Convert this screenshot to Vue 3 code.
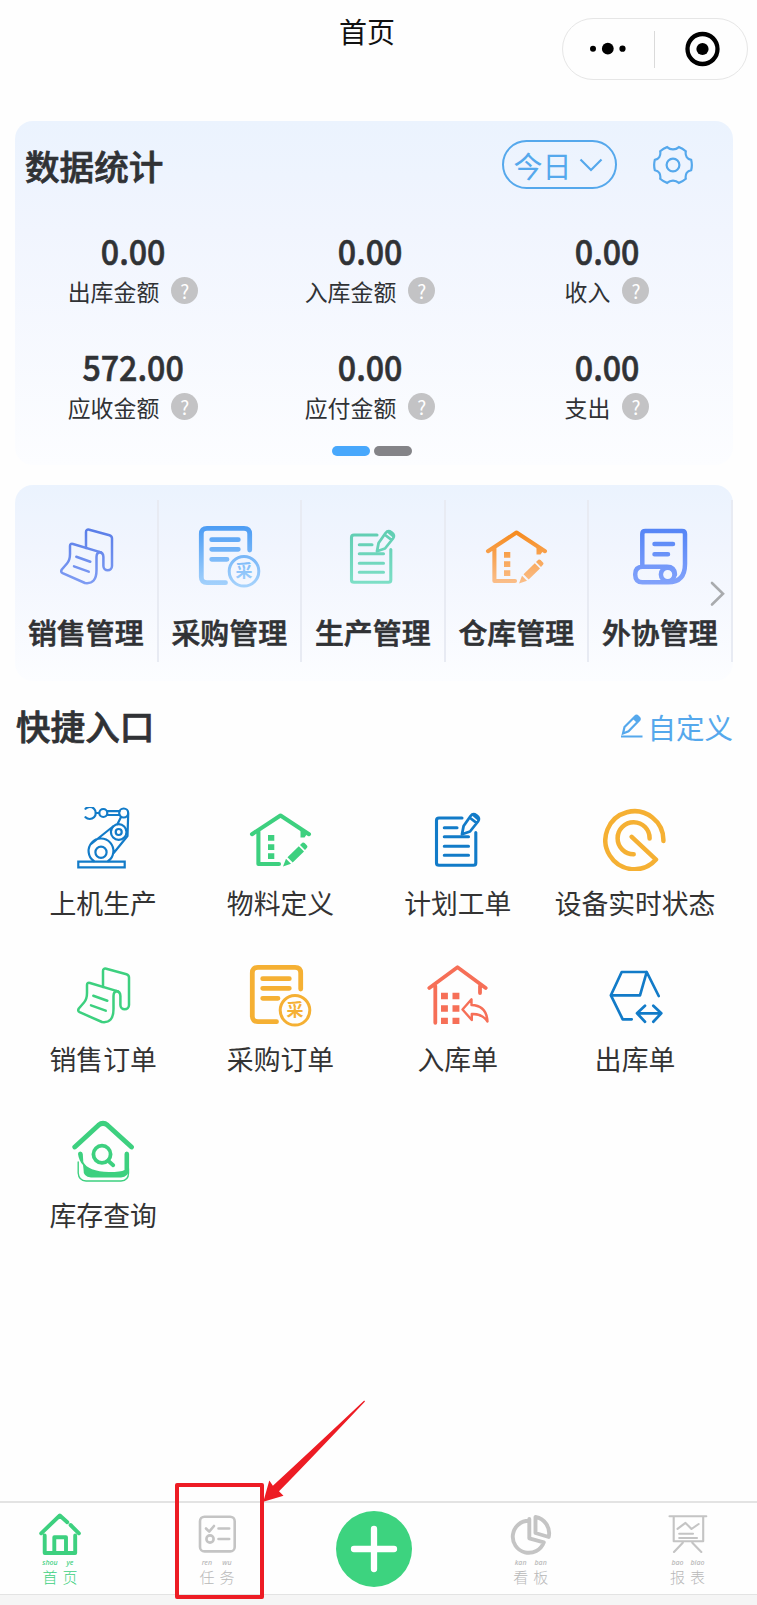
<script setup>
const stats = [
  { value: '0.00', label: '出库金额' },
  { value: '0.00', label: '入库金额' },
  { value: '0.00', label: '收入' },
  { value: '572.00', label: '应收金额' },
  { value: '0.00', label: '应付金额' },
  { value: '0.00', label: '支出' },
]

const modules = [
  { label: '销售管理', icon: 'sale', ink: 'ink-indigo' },
  { label: '采购管理', icon: 'purchase', ink: 'ink-sky', seal: '采' },
  { label: '生产管理', icon: 'plan', ink: 'ink-mint' },
  { label: '仓库管理', icon: 'material', ink: 'ink-orange' },
  { label: '外协管理', icon: 'scroll', ink: 'ink-royal' },
]

const shortcuts = [
  { label: '上机生产', icon: 'robot', ink: 'ink-blue' },
  { label: '物料定义', icon: 'material', ink: 'ink-green' },
  { label: '计划工单', icon: 'plan', ink: 'ink-blue' },
  { label: '设备实时状态', icon: 'device', ink: 'ink-amber' },
  { label: '销售订单', icon: 'sale', ink: 'ink-green' },
  { label: '采购订单', icon: 'purchase', ink: 'ink-amber', seal: '采' },
  { label: '入库单', icon: 'inbound', ink: 'ink-coral' },
  { label: '出库单', icon: 'outbound', ink: 'ink-blue' },
  { label: '库存查询', icon: 'stock', ink: 'ink-green' },
]

const tabs = [
  { icon: 'home', chars: [['shou', '首'], ['ye', '页']], active: true },
  { icon: 'task', chars: [['ren', '任'], ['wu', '务']] },
  { icon: 'add' },
  { icon: 'board', chars: [['kan', '看'], ['ban', '板']] },
  { icon: 'report', chars: [['bao', '报'], ['biao', '表']] },
]
</script>

<template>
  <div class="page">
    <svg class="defs" width="0" height="0" aria-hidden="true">
      <defs>
        <linearGradient id="g-indigo" gradientUnits="userSpaceOnUse" x1="0" y1="5" x2="0" y2="60"><stop offset="0" stop-color="#5a7ee8" /><stop offset="1" stop-color="#7f9cf3" /></linearGradient>
        <linearGradient id="g-sky" gradientUnits="userSpaceOnUse" x1="0" y1="3" x2="0" y2="62"><stop offset="0" stop-color="#4d9df4" /><stop offset="1" stop-color="#a5d2fc" /></linearGradient>
        <linearGradient id="g-mint" gradientUnits="userSpaceOnUse" x1="0" y1="6" x2="0" y2="60"><stop offset="0" stop-color="#60cdb2" /><stop offset="1" stop-color="#7ddfc6" /></linearGradient>
        <linearGradient id="g-orange" gradientUnits="userSpaceOnUse" x1="0" y1="8" x2="0" y2="60"><stop offset="0" stop-color="#f68b1f" /><stop offset="1" stop-color="#fabf8c" /></linearGradient>
        <linearGradient id="g-royal" gradientUnits="userSpaceOnUse" x1="0" y1="5" x2="0" y2="60"><stop offset="0" stop-color="#5585f6" /><stop offset="1" stop-color="#82a2fb" /></linearGradient>
      </defs>

      <symbol id="sale" viewBox="0 0 64 64">
        <g class="s" stroke-width="2.5">
          <path d="M32 24V8Q32 5 35.3 5.7L55.5 11.2Q58 12 58 14.5V42a4.3 4.3 0 0 1-8.6 0V33Q49.4 28.5 45 28" />
          <path d="M47 28.4L19 20Q16 19.3 16 22V30Q16 36 13 39.5L7.8 45.5Q6.3 48 8.6 49.2L31 59Q42.5 60.5 42.5 46V33Q42.5 28.2 46 28.2" />
          <path d="M22.3 32.7l14 5M20 42.3l14.7 5.4" />
        </g>
      </symbol>
      <symbol id="purchase" viewBox="0 0 64 64">
        <path class="s" stroke-width="4.8" d="M28.5 58.7H10Q4.300 58.7 4.3 53V10Q4.3 4.3 10 4.3H47Q52.7 4.3 52.7 10V26M14.7 15.7H41.3M14.7 25.3H41.3M14.7 35.3H30" />
        <circle class="s" stroke-width="3" cx="47" cy="47.3" r="14.8" />
      </symbol>
      <symbol id="plan" viewBox="0 0 64 64">
        <path class="s" stroke-width="3.1" d="M36 11H13Q10.5 11 10.5 13.5V56Q10.5 58.3 13 58.3H47.500Q49.8 58.3 49.8 56V25.5M18.3 20.7H31M18.3 29.8H42.5M18.3 39.3H42.5M18.3 48.3H42.5" />
        <path class="s" stroke-width="2.8" d="M36 27.3L37.6 19 44.600 9Q47 6 50.500 8.300 54.300 11 52 14.500L44 24.500ZM44.800 11.500l5.700 4.300M48 8.500l4 3.300" />
      </symbol>
      <symbol id="material" viewBox="0 0 64 64">
        <path class="s" stroke-width="4.100" stroke-linejoin="miter" stroke-linecap="butt" d="M4 27.200L32.500 8.500 61 27.200M10.400 24V57H31" />
        <path class="f" d="M52.500 23h4.500l2 4-2.500 3.500h-4z" />
        <path class="f" d="M20 28h6.300v5.800H20zM20 37.200h6.300V43H20zM20 46.200h6.300V52H20zM35 59.500L38 51.700 43 56.700zM39.500 50.300L50.800 39.300 56 44.500 44.700 55.500zM52 38L54.300 35.800Q55.500 35 56.600 36L59 38.400Q60 39.500 59 40.800L57 43z" />
      </symbol>
      <symbol id="scroll" viewBox="0 0 64 64">
        <g class="s" stroke-width="4.500">
          <path d="M14.300 42V10Q14.300 7 17.300 7H54Q57 7 57 10V40Q57 58.300 40 58.300H14.500Q7.200 58.300 7.200 50.500 7.200 42.700 14.500 42.700H39Q46.500 42.700 47 50.300" />
          <circle cx="39.700" cy="50.500" r="6.800" /><path d="M26.500 20H45M26.500 30.300H40" />
        </g>
      </symbol>
      <symbol id="robot" viewBox="0 0 64 64">
        <g class="s" stroke-width="2.200">
          <path d="M14.500 1.800A6 6 0 1 1 14.500 10.200M24.500 6H28M36.500 4.200H48.500M36.500 8H48.500" />
          <circle cx="32.300" cy="6" r="4" /><circle cx="52.700" cy="6" r="4.500" />
          <circle cx="47.700" cy="25" r="7.800" /><circle cx="47.700" cy="25" r="3" />
          <path d="M57.200 7L56.500 29 42.700 46M50 10L46.500 17M19.500 37.500L42 19.500M22.800 54A12.400 12.400 0 1 1 37.200 54" />
          <circle cx="30" cy="45.300" r="5.600" /><path d="M7.300 54.600H53.700V60.300H7.300z" stroke-linejoin="miter" />
        </g>
      </symbol>
      <symbol id="device" viewBox="0 0 64 64">
        <path class="s" stroke-width="4.500" d="M60.400 34A29 29 0 1 0 53 52.600L28.700 29.800M46.600 31.500A16 16 0 1 0 30.700 47.200" />
      </symbol>
      <symbol id="inbound" viewBox="0 0 64 64">
        <path class="s" stroke-width="3.800" d="M3.300 25L31.500 4.300 59.700 25M9.300 23V59.800M54 23V30" />
        <path class="f" d="M15 29.800h6.900v6.500h-6.900zM26.500 29.800h6.900v6.500h-6.900zM15 42.200h6.900v6.500h-6.900zM26.500 42.200h6.900v6.500h-6.900zM15 54.700h6.900V61h-6.900zM26.500 54.700h6.900V61h-6.900z" />
        <path class="s" stroke-width="2.400" d="M36.500 46.500L45.500 36.300V42Q60.500 42.500 61.500 58.500 56 50.500 45.800 51V57z" />
      </symbol>
      <symbol id="outbound" viewBox="0 0 64 64">
        <path class="s" stroke-width="2.700" stroke-linejoin="miter" d="M55.700 33L43.700 9H18.700L7.900 32.300H37L43.700 9M7.900 32.300L19.700 56.300H28.700M34 50.300H58.300M42 42.700L34 50.300 42 58.700M50.300 42.700L58.300 50.300 50.300 58.700" />
      </symbol>
      <symbol id="stock" viewBox="0 0 64 64">
        <path class="s" stroke-width="4.900" d="M3.800 28L27.500 6.200Q32 2.500 36.500 6.200L60.500 28" />
        <circle class="s" cx="31" cy="35.300" r="8.600" stroke-width="3.800" />
        <path class="s" stroke-width="3.900" d="M38 42.500L42.200 46.200" />
        <path class="f" d="M7 35Q7 32.500 9.200 32.500 11.600 32.500 11.800 35L12.300 43Q17 52.500 38 53 50 53 53.500 51V35Q53.500 32.500 55.800 32.500 58.100 32.500 58.100 35V50Q57.500 58 50 58.500H20Q12 58 12.500 50L12 46Q8 42 7 35z" />
        <path class="s" stroke-width="1.400" d="M7.200 43V54Q7.800 61.800 15 62H50Q57.500 61.500 57.500 54V50" />
      </symbol>

      <symbol id="home" viewBox="0 0 44 44">
        <path class="s" stroke-width="3.900" d="M3.200 22.300L21.800 4.500 29.300 11.300M32.600 14L40.900 22.300M6.700 24.500V42H37.200V24.500" />
        <path class="s" stroke-width="3.900" d="M16.300 41V26.300H28V41" />
      </symbol>
      <symbol id="task" viewBox="0 0 44 44">
        <g class="s" stroke-width="2.600">
          <rect x="5" y="5.700" width="34.700" height="34.700" rx="4.500" />
          <path d="M11 17.500L14.200 20.700 19 15M23.500 17.500H34.200M23.500 28H34.200" /><circle cx="15" cy="28" r="3.600" />
        </g>
      </symbol>
      <symbol id="board" viewBox="0 0 44 44">
        <path class="s" stroke-width="3.900" stroke-linejoin="miter" stroke-linecap="butt" d="M20.300 9.800A16 16 0 1 0 34.800 31.300L20.300 27.300V7.900M26.500 6V22L39.700 26A16.500 16.500 0 0 0 26.500 6z" />
      </symbol>
      <symbol id="report" viewBox="0 0 44 44">
        <path class="s" stroke-width="2.100" d="M3.500 5.300H40.300M7.700 5.500V30.300H37.200V5.500M11.500 17.800L19.500 11.900 25.500 18 32.700 13M13.200 22.700H27M13.200 27H31M16.800 31.700L8 41M26.300 31.700L35.300 41" />
      </symbol>
    </svg>

    <header class="nav">
      <h1 class="nav-title">首页</h1>
      <div class="capsule">
        <svg class="capsule-half" viewBox="0 0 92 60"><circle cx="30" cy="29.700" r="3" /><circle cx="44.800" cy="29.700" r="5.900" /><circle cx="59.500" cy="29.700" r="3.100" /></svg>
        <span class="capsule-line"></span>
        <svg class="capsule-half" viewBox="0 0 92 60"><circle class="ring" cx="47.500" cy="30" r="15" /><circle cx="47.500" cy="30" r="6.100" /></svg>
      </div>
    </header>

    <section class="card stat-card">
      <div class="stat-head">
        <h2 class="heading">数据统计</h2>
        <button class="period">
          <span>今日</span>
          <svg width="24" height="14" viewBox="0 0 24 14"><path d="M1.500 1.500L12 12 22.500 1.500" /></svg>
        </button>
        <svg class="gear" width="40" height="40" viewBox="0 0 40 40">
          <path d="M14.100 2.100C17.500 5.200 22.500 5.200 25.900 2.100Q29.500 3.200 32.800 6.200C32 11 34.300 14.200 38.200 14.900Q39.500 20 38.200 25.100C34.300 25.800 32 29 32.800 33.800Q29.500 36.800 25.900 37.900C22.500 34.800 17.500 34.800 14.100 37.900Q10.500 36.800 7.200 33.800C8 29 5.700 25.800 1.800 25.100Q.5 20 1.800 14.900C5.700 14.200 8 11 7.200 6.200Q10.500 3.200 14.100 2.100z" /><circle cx="20" cy="20" r="6.400" />
        </svg>
      </div>
      <div class="stat-grid">
        <div v-for="item in stats" :key="item.label" class="stat">
          <strong class="stat-value">{{ item.value }}</strong>
          <span class="stat-label">{{ item.label }}<i class="help">?</i></span>
        </div>
      </div>
      <div class="dots"><span class="dot on"></span><span class="dot"></span></div>
    </section>

    <section class="card modules">
      <div v-for="item in modules" :key="item.label" class="module">
        <svg class="icon" :class="item.ink">
          <use :href="'#' + item.icon" />
          <text v-if="item.seal" class="f seal" x="47" y="53.400" text-anchor="middle">{{ item.seal }}</text>
        </svg>
        <span class="module-label">{{ item.label }}</span>
      </div>
      <svg class="next" width="16" height="26" viewBox="0 0 16 26"><path d="M2 2L13 12.700 2 23.500" /></svg>
    </section>

    <div class="quick-head">
      <h2 class="heading">快捷入口</h2>
      <a class="customize">
        <svg width="24" height="24" viewBox="0 0 24 24"><path d="M1 22.500H22.500M3 19.500L4.500 13 15 2.500Q16.500 1 18 2.500L19 3.500Q20.500 5 19 6.500L8.500 17.200zM13.500 4L17.500 8M15.500 3L18.500 6" /></svg>
        <span>自定义</span>
      </a>
    </div>

    <section class="quick-grid">
      <div v-for="item in shortcuts" :key="item.label" class="quick">
        <svg class="icon" :class="item.ink">
          <use :href="'#' + item.icon" />
          <text v-if="item.seal" class="f seal" x="47" y="53.400" text-anchor="middle">{{ item.seal }}</text>
        </svg>
        <span class="quick-label">{{ item.label }}</span>
      </div>
    </section>

    <nav class="tabbar">
      <div v-for="tab in tabs" :key="tab.icon" class="tab" :class="{ active: tab.active }">
        <svg v-if="tab.icon === 'add'" class="add" viewBox="0 0 76 76"><circle cx="38" cy="38" r="38" /><path d="M38 18V58M18 38H58" /></svg>
        <template v-else>
          <svg class="tab-icon"><use :href="'#' + tab.icon" /></svg>
          <div class="tab-label">
            <span v-for="[pinyin, char] in tab.chars" :key="char" class="glyph"><small>{{ pinyin }}</small><b>{{ char }}</b></span>
          </div>
        </template>
      </div>
    </nav>
    <div class="safe-area"></div>

    <div class="mark-box"></div>
    <svg class="mark-arrow" width="104" height="104" viewBox="0 0 104 104"><path d="M.3 102.700L6.300 81.500 9.900 86.700Q40 59 101.200 1.500L102 2.500Q42 66 16 92.300L20.500 96.700z" /></svg>
  </div>
</template>

<style>
body {
  margin: 0;
  background: #fefefe;
}
</style>

<style scoped>
.page {
  position: relative;
  display: flex;
  flex-direction: column;
  width: 757px;
  height: 1605px;
  overflow: hidden;
  background: #fefefe;
  color: #303235;
  font-family: "Noto Sans CJK SC", "Noto Sans", sans-serif;
}
.defs { position: absolute; }
svg { display: block; }
h1, h2 { margin: 0; }

.s { fill: none; stroke: var(--ink); stroke-linecap: round; stroke-linejoin: round; }
.f { fill: var(--ink); stroke: none; }
.seal { font-size: 17px; font-weight: 700; }
.ink-indigo { --ink: url(#g-indigo); }
.ink-sky { --ink: url(#g-sky); }
.ink-mint { --ink: url(#g-mint); }
.ink-orange { --ink: url(#g-orange); }
.ink-royal { --ink: url(#g-royal); }
.ink-blue { --ink: #127bc8; }
.ink-green { --ink: #3dd07f; }
.ink-amber { --ink: #f5b033; }
.ink-coral { --ink: #f66f57; }
.icon { width: 64px; height: 64px; }

.nav {
  display: flex;
  flex: none;
  height: 121px;
  justify-content: flex-end;
  padding-right: 9px;
}
.nav-title {
  width: 60px;
  margin-right: 165px;
  color: #111;
  font-size: 28px;
  font-weight: 400;
  line-height: 63px;
  text-align: center;
}
.capsule {
  box-sizing: border-box;
  display: flex;
  align-items: center;
  width: 186px;
  height: 62px;
  margin-top: 18px;
  border: 1px solid #e6e6e6;
  border-radius: 31px;
}
.capsule-half { width: 92px; height: 60px; flex: none; }
.capsule-line { width: 1px; height: 37px; margin: 0 0 0 -1px; background: #dadada; }
.ring { fill: none; stroke: #000; stroke-width: 4.300; }

.card {
  position: relative;
  box-sizing: border-box;
  flex: none;
  width: 718px;
  margin-left: 15px;
  border-radius: 18px;
  background: linear-gradient(#ebf3fe, #f1f5fe 32%, #fcfdff);
}
.stat-card { height: 344px; }
.stat-head { display: flex; align-items: center; height: 91px; padding: 0 40px 0 10px; }
.heading {
  flex: 1;
  margin-top: -4px;
  color: #303235;
  font-size: 34.600px;
  font-weight: 500;
  line-height: 50px;
  -webkit-text-stroke: 0.7px currentColor;
}
.period {
  box-sizing: border-box;
  display: flex;
  align-items: center;
  width: 115.500px;
  height: 49px;
  margin: -4px 36px 0 0;
  padding: 0 0 0 10px;
  border: 2px solid #55a8ec;
  border-radius: 25px;
  background: none;
  color: #55a8ec;
  font: 29px/45px "Noto Sans CJK SC", sans-serif;
}
.period span { margin: 2px 7px 0 0; }
.period path, .gear path, .gear circle, .customize path { fill: none; stroke: #55a8ec; stroke-width: 2.200; }
.gear { margin-top: -4px; }
.stat-grid { display: grid; grid-template-columns: repeat(3, 237px); grid-auto-rows: 115.500px; height: 231px; padding-top: 13px; }
.stat { display: flex; flex-direction: column; align-items: center; }
.stat-value {
  height: 50px;
  font-size: 35px;
  font-weight: 500;
  line-height: 50px;
  transform: scaleX(0.92);
  -webkit-text-stroke: 0.6px currentColor;
}
.stat-label { display: flex; align-items: center; height: 32px; margin-left: -1px; font-size: 22.900px; line-height: 32px; }
.help {
  width: 27px;
  height: 27px;
  margin: -1px 0 0 12px;
  border-radius: 50%;
  background: #c3c3c5;
  color: #fff;
  font-size: 19px;
  font-style: normal;
  line-height: 27px;
  text-align: center;
}
.dots { position: absolute; left: 317px; bottom: 9px; display: flex; gap: 4px; }
.dot { width: 38px; height: 10px; border-radius: 5px; background: #848488; }
.dot.on { background: #48a8fc; }

.modules { display: flex; height: 196px; margin-top: 20px; }
.module {
  box-sizing: border-box;
  display: flex;
  flex-direction: column;
  align-items: center;
  width: 143.500px;
  height: 162px;
  margin-top: 15px;
  padding-top: 24px;
  border-right: 2px solid #e8ebf3;
}
.module-label {
  margin-top: 22px;
  color: #303235;
  font-size: 28.900px;
  font-weight: 500;
  line-height: 42px;
  white-space: nowrap;
  -webkit-text-stroke: 0.6px currentColor;
}
.next { position: absolute; top: 96px; right: 7px; }
.next path { fill: none; stroke: #a9abae; stroke-width: 2.600; stroke-linecap: round; }

.quick-head { display: flex; align-items: center; flex: none; height: 90px; padding: 0 24px 0 16px; }
.quick-head .heading { margin-top: -2px; }
.customize { display: flex; align-items: center; gap: 3px; color: #55a8ec; font-size: 28.500px; }

.quick-grid { display: grid; grid-template-columns: repeat(4, 177.300px); grid-auto-rows: 156px; flex: none; margin: 36px 0 0 14.500px; }
.quick { display: flex; flex-direction: column; align-items: center; }
.quick-label { margin-top: 12px; color: #333; font-size: 26.800px; line-height: 40px; white-space: nowrap; }

.tabbar {
  box-sizing: border-box;
  display: flex;
  justify-content: space-between;
  flex: none;
  height: 94px;
  margin-top: auto;
  padding: 8px 30px 0 20.500px;
  border-top: 2px solid #e3e3e3;
  border-bottom: 1px solid #e3e3e3;
}
.tab { --ink: #c4c4c4; display: flex; flex-direction: column; align-items: center; width: 79px; color: #b8b8b8; }
.tab.active { --ink: #3dd07f; color: #3dd07f; }
.tab-icon { width: 44px; height: 44px; }
.tab-label { display: flex; gap: 5px; margin-top: 3px; }
.glyph { display: flex; flex-direction: column; align-items: center; width: 15px; }
.glyph small { height: 10px; font: italic 500 7px/10px "Noto Sans", sans-serif; }
.glyph b { height: 17px; font-size: 15px; font-weight: 300; line-height: 17px; }
.add { width: 76px; height: 76px; }
.add circle { fill: #3dd37f; }
.add path { fill: none; stroke: #fff; stroke-width: 6.300; stroke-linecap: round; }
.safe-area { flex: none; height: 10px; background: #f5f5f5; }

.mark-box {
  position: absolute;
  box-sizing: border-box;
  left: 175px;
  top: 1483px;
  width: 89px;
  height: 116px;
  border: 4px solid #ed1c24;
  border-radius: 2px;
}
.mark-arrow { position: absolute; left: 263px; top: 1399px; fill: #ed1c24; }
</style>
